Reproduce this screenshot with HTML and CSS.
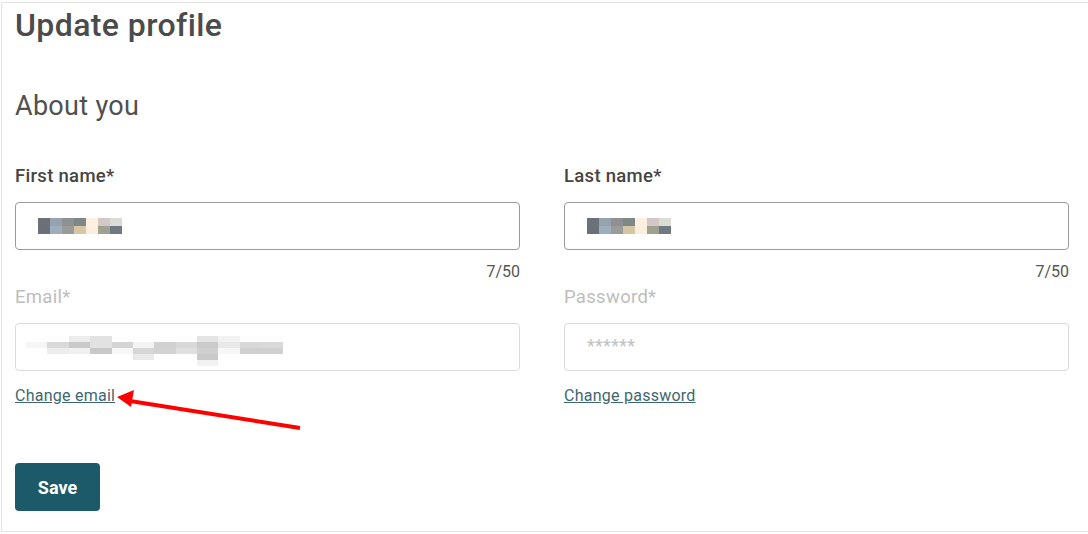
FILE: index.html
```html
<!DOCTYPE html>
<html lang="en">
<head>
<meta charset="utf-8">
<title>Update profile</title>
<link rel="stylesheet" href="styles.css">
</head>
<body>
<div class="page">
  <h1 class="title">Update profile</h1>
  <h2 class="section">About you</h2>
  <div class="grid">
    <div class="field">
      <label class="label">First name*</label>
      <div class="input">
        <svg class="blur-name" width="84" height="16" viewBox="38 218 84 16">
          <rect x="38" y="218" width="12" height="8" fill="#6b7079"/>
          <rect x="38" y="226" width="12" height="8" fill="#6a6f78"/>
          <rect x="50" y="218" width="12" height="8" fill="#95a3ad"/>
          <rect x="50" y="226" width="12" height="8" fill="#9aaebb"/>
          <rect x="62" y="218" width="12" height="8" fill="#8f9091"/>
          <rect x="62" y="226" width="12" height="8" fill="#9a9a98"/>
          <rect x="74" y="218" width="12" height="8" fill="#7e8886"/>
          <rect x="74" y="226" width="12" height="8" fill="#d6c6a6"/>
          <rect x="86" y="218" width="12" height="8" fill="#fdf0e0"/>
          <rect x="86" y="226" width="12" height="8" fill="#fbeedc"/>
          <rect x="98" y="218" width="12" height="8" fill="#d3c8c9"/>
          <rect x="98" y="226" width="12" height="8" fill="#9fa190"/>
          <rect x="110" y="218" width="12" height="8" fill="#dcdcd6"/>
          <rect x="110" y="226" width="12" height="8" fill="#707881"/>
        </svg>
      </div>
      <div class="counter">7/50</div>
    </div>
    <div class="field">
      <label class="label">Last name*</label>
      <div class="input">
        <svg class="blur-name" width="84" height="16" viewBox="38 218 84 16">
          <rect x="38" y="218" width="12" height="8" fill="#6b7079"/>
          <rect x="38" y="226" width="12" height="8" fill="#6a6f78"/>
          <rect x="50" y="218" width="12" height="8" fill="#95a3ad"/>
          <rect x="50" y="226" width="12" height="8" fill="#9aaebb"/>
          <rect x="62" y="218" width="12" height="8" fill="#8f9091"/>
          <rect x="62" y="226" width="12" height="8" fill="#9a9a98"/>
          <rect x="74" y="218" width="12" height="8" fill="#7e8886"/>
          <rect x="74" y="226" width="12" height="8" fill="#d6c6a6"/>
          <rect x="86" y="218" width="12" height="8" fill="#fdf0e0"/>
          <rect x="86" y="226" width="12" height="8" fill="#fbeedc"/>
          <rect x="98" y="218" width="12" height="8" fill="#d3c8c9"/>
          <rect x="98" y="226" width="12" height="8" fill="#9fa190"/>
          <rect x="110" y="218" width="12" height="8" fill="#dcdcd6"/>
          <rect x="110" y="226" width="12" height="8" fill="#707881"/>
        </svg>
      </div>
      <div class="counter">7/50</div>
    </div>
    <div class="field">
      <label class="label label-disabled">Email*</label>
      <div class="input input-disabled">
        <svg class="blur-email" width="260" height="30" viewBox="25 336 260 30">
          <rect x="25" y="342" width="21" height="6" fill="#f6f6f6"/>
          <rect x="68" y="336" width="21" height="6" fill="#ececec"/>
          <rect x="89" y="336" width="22" height="6" fill="#e2e2e2"/>
          <rect x="196" y="336" width="21" height="6" fill="#e4e4e4"/>
          <rect x="217" y="336" width="22" height="6" fill="#f2f2f2"/>
          <rect x="46" y="342" width="22" height="6" fill="#d9d9d9"/>
          <rect x="68" y="342" width="21" height="6" fill="#c9c9c9"/>
          <rect x="89" y="342" width="22" height="6" fill="#e1e1e1"/>
          <rect x="111" y="342" width="21" height="6" fill="#d4d4d4"/>
          <rect x="132" y="342" width="21" height="6" fill="#f3f3f3"/>
          <rect x="153" y="342" width="22" height="6" fill="#d1d1d1"/>
          <rect x="175" y="342" width="21" height="6" fill="#d8d8d8"/>
          <rect x="196" y="342" width="21" height="6" fill="#cacaca"/>
          <rect x="217" y="342" width="22" height="6" fill="#e8e8e8"/>
          <rect x="239" y="342" width="21" height="6" fill="#d8d8d8"/>
          <rect x="260" y="342" width="22" height="6" fill="#d9d9d9"/>
          <rect x="46" y="348" width="22" height="6" fill="#ececec"/>
          <rect x="68" y="348" width="21" height="6" fill="#f0f0f0"/>
          <rect x="89" y="348" width="22" height="6" fill="#c8c8c8"/>
          <rect x="111" y="348" width="21" height="6" fill="#f7f7f7"/>
          <rect x="132" y="348" width="21" height="6" fill="#d6d6d6"/>
          <rect x="153" y="348" width="22" height="6" fill="#d2d2d2"/>
          <rect x="175" y="348" width="21" height="6" fill="#e0e0e0"/>
          <rect x="196" y="348" width="21" height="6" fill="#d0d0d0"/>
          <rect x="217" y="348" width="22" height="6" fill="#f6f6f6"/>
          <rect x="239" y="348" width="21" height="6" fill="#d0d0d0"/>
          <rect x="260" y="348" width="22" height="6" fill="#d0d0d0"/>
          <rect x="132" y="354" width="21" height="6" fill="#e9e9e9"/>
          <rect x="196" y="354" width="21" height="6" fill="#c9c9c9"/>
          <rect x="196" y="360" width="21" height="6" fill="#f1f1f1"/>
        </svg>
      </div>
      <a class="link" href="#">Change email</a>
    </div>
    <div class="field">
      <label class="label label-disabled">Password*</label>
      <div class="input input-disabled input-text">******</div>
      <a class="link" href="#">Change password</a>
    </div>
  </div>
  <button class="save" type="button">Save</button>
</div>
<svg class="arrow" width="1088" height="534" viewBox="0 0 1088 534">
  <line x1="300" y1="428" x2="130" y2="401" stroke="#ff0000" stroke-width="4"/>
  <polygon points="117,397 134,390 131,407" fill="#ff0000"/>
</svg>
</body>
</html>
```

FILE: styles.css
```css
* {
  box-sizing: border-box;
}

html, body {
  margin: 0;
  padding: 0;
  background: #ffffff;
}

body {
  font-family: Roboto, "Liberation Sans", Arial, sans-serif;
  color: #444444;
  position: relative;
}

.page {
  margin: 2px 0 0 1px;
  height: 530px;
  border: 1px solid #e3e3e3;
  border-right: none;
  padding: 0 0 0 13px;
}

.title {
  margin: 4px 0 0;
  font-size: 32px;
  line-height: 36px;
  font-weight: 500;
  letter-spacing: 0.4px;
  color: #4b4b4b;
}

.section {
  margin: 48px 0 0;
  font-size: 27px;
  line-height: 30px;
  font-weight: 400;
  letter-spacing: 0.3px;
  color: #505050;
}

.grid {
  display: grid;
  grid-template-columns: 505px 505px;
  column-gap: 44px;
  margin-top: 43px;
}

.field {
  display: flex;
  flex-direction: column;
  align-items: flex-start;
}

.label {
  font-size: 18.5px;
  line-height: 24px;
  font-weight: 500;
  letter-spacing: 0.3px;
  color: #454545;
  margin-bottom: 14px;
}

.label-disabled {
  font-weight: 400;
  color: #bdbdbd;
}

.input {
  width: 100%;
  height: 48px;
  border: 1px solid #9a9a9a;
  border-radius: 4px;
  background: #ffffff;
  padding: 15px 0 0 22px;
}

.input-disabled {
  border-color: #dcdcdc;
  padding: 12px 0 0 10px;
}

.input-text {
  padding: 0 0 0 22px;
  font-size: 18px;
  line-height: 44px;
  letter-spacing: 0.3px;
  color: #c2c2c2;
}

.input svg {
  display: block;
}

.counter {
  align-self: flex-end;
  margin-top: 12px;
  font-size: 16px;
  line-height: 20px;
  color: #555555;
  margin-bottom: 3px;
}

.link {
  margin-top: 15px;
  font-size: 16px;
  line-height: 20px;
  letter-spacing: 0.25px;
  color: #3d6772;
  text-decoration: underline;
}

.save {
  display: block;
  margin-top: 57px;
  width: 85px;
  height: 48px;
  border: none;
  border-radius: 4px;
  background: #1d5a69;
  color: #ffffff;
  font-family: Roboto, "Liberation Sans", Arial, sans-serif;
  font-size: 18px;
  font-weight: 700;
  padding: 0;
}

.arrow {
  position: absolute;
  left: 0;
  top: 0;
  pointer-events: none;
}
```
